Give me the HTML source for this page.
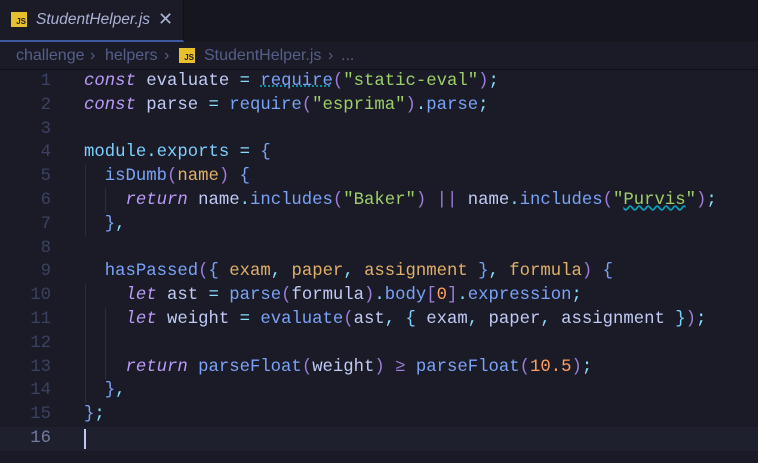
<!DOCTYPE html>
<html><head><style>
body{margin:0;width:758px;height:463px;background:#1a1b26;overflow:hidden;font-family:"Liberation Sans",sans-serif;position:relative}
.tabbar{position:absolute;left:0;top:0;width:758px;height:42px;background:#16161e}
.tab{position:absolute;left:0;top:0;width:183px;height:40px;background:#1a1b26;border-right:1px solid #101014;border-bottom:2px solid #3d59a1}
.js{position:absolute;width:16px;height:15px;background:#e8c02c;color:#1a1b26;font:bold 8px "Liberation Sans",sans-serif;text-align:right;line-height:19px;box-sizing:border-box;padding-right:1px}
.tabt{position:absolute;left:36px;top:11px;font-style:italic;font-size:15.5px;color:#a9b1d6}
.x{position:absolute;left:158px;top:9px;font-size:18px;color:#a9b1d6}
.bc{position:absolute;left:0;top:42px;width:758px;height:27px;border-bottom:1px solid #101014;font-size:16px;color:#565f89;line-height:27px}
.bc span{position:absolute;top:0}
.ed{position:absolute;left:0;top:70px;width:758px;font-family:"Liberation Mono",monospace;font-size:17.3px}
.l{height:23.8px;line-height:23.8px;position:relative;white-space:pre;color:#c0caf5}
.n{position:absolute;left:0;width:51px;text-align:right;color:#3b4261}
.c{position:absolute;left:84px}
.cur{background:#1e202e}
.cur .n{color:#737aa2}
.k{color:#bb9af7;font-style:italic}.f{color:#7aa2f7}.s{color:#9ece6a}.p{color:#89ddff}.m{color:#7dcfff}.a{color:#e0af68}.o{color:#ff9e64}.b{color:#7aa2f7}.v{color:#c0caf5}.pu{color:#9d7cd8}
.g{position:absolute;width:1px;background:#2a2d3d}
</style></head><body>
<div class="tabbar"><div class="tab"><div class="js" style="left:11px;top:12px">JS</div><div class="tabt">StudentHelper.js</div><div class="x">✕</div></div></div>
<div class="bc"><span style="left:16px">challenge</span><span style="left:90px">›</span><span style="left:105px">helpers</span><span style="left:164px">›</span><div class="js" style="left:179px;top:6px">JS</div><span style="left:204px">StudentHelper.js</span><span style="left:328px">›</span><span style="left:341px">...</span></div>
<div class="g" style="left:105px;top:188px;height:24px"></div>
<div class="g" style="left:85px;top:165px;height:71px"></div>
<div class="g" style="left:85px;top:284px;height:119px"></div>
<div class="g" style="left:105px;top:308px;height:71px"></div>
<div class="ed">
<div class="l"><span class="n">1</span><span class="c"><span class="k">const</span> evaluate <span class="p">=</span> <span class="f" style="text-decoration:underline dotted #0da0ba">require</span><span class="pu">(</span><span class="s">"static-eval"</span><span class="pu">)</span><span class="p">;</span></span></div>
<div class="l"><span class="n">2</span><span class="c"><span class="k">const</span> parse <span class="p">=</span> <span class="f">require</span><span class="pu">(</span><span class="s">"esprima"</span><span class="pu">)</span><span class="p">.</span><span class="f">parse</span><span class="p">;</span></span></div>
<div class="l"><span class="n">3</span></div>
<div class="l"><span class="n">4</span><span class="c"><span class="m">module</span><span class="p">.</span><span class="m">exports</span> <span class="p">=</span> <span class="b">{</span></span></div>
<div class="l"><span class="n">5</span><span class="c">  <span class="f">isDumb</span><span class="pu">(</span><span class="a">name</span><span class="pu">)</span> <span class="b">{</span></span></div>
<div class="l"><span class="n">6</span><span class="c">    <span class="k">return</span> name<span class="p">.</span><span class="f">includes</span><span class="pu">(</span><span class="s">"Baker"</span><span class="pu">)</span> <span class="pu">||</span> name<span class="p">.</span><span class="f">includes</span><span class="pu">(</span><span class="s">"<span style="text-decoration:underline wavy #0da0ba">Purvis</span>"</span><span class="pu">)</span><span class="p">;</span></span></div>
<div class="l"><span class="n">7</span><span class="c">  <span class="b">}</span><span class="p">,</span></span></div>
<div class="l"><span class="n">8</span></div>
<div class="l"><span class="n">9</span><span class="c">  <span class="f">hasPassed</span><span class="pu">(</span><span class="b">{</span> <span class="a">exam</span><span class="p">,</span> <span class="a">paper</span><span class="p">,</span> <span class="a">assignment</span> <span class="b">}</span><span class="p">,</span> <span class="a">formula</span><span class="pu">)</span> <span class="b">{</span></span></div>
<div class="l"><span class="n">10</span><span class="c">    <span class="k">let</span> ast <span class="p">=</span> <span class="f">parse</span><span class="pu">(</span>formula<span class="pu">)</span><span class="p">.</span><span class="f">body</span><span class="pu">[</span><span class="o">0</span><span class="pu">]</span><span class="p">.</span><span class="f">expression</span><span class="p">;</span></span></div>
<div class="l"><span class="n">11</span><span class="c">    <span class="k">let</span> weight <span class="p">=</span> <span class="f">evaluate</span><span class="pu">(</span>ast<span class="p">,</span> <span class="m">{</span> exam<span class="p">,</span> paper<span class="p">,</span> assignment <span class="m">}</span><span class="pu">)</span><span class="p">;</span></span></div>
<div class="l"><span class="n">12</span></div>
<div class="l"><span class="n">13</span><span class="c">    <span class="k">return</span> <span class="f">parseFloat</span><span class="pu">(</span>weight<span class="pu">)</span> <span class="pu">≥</span> <span class="f">parseFloat</span><span class="pu">(</span><span class="o">10.5</span><span class="pu">)</span><span class="p">;</span></span></div>
<div class="l"><span class="n">14</span><span class="c">  <span class="b">}</span><span class="p">,</span></span></div>
<div class="l"><span class="n">15</span><span class="c"><span class="b">}</span><span class="p">;</span></span></div>
<div class="l cur"><span class="n">16</span><span class="c" style="border-left:2px solid #c0caf5;height:20px;top:2px"></span></div>
</div>
</body></html>
